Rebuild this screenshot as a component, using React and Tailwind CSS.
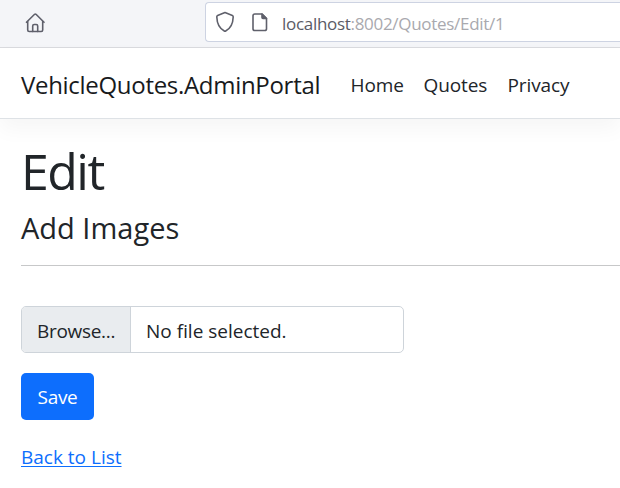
import React from "react";

function HomeIcon() {
  return (
    <svg width="20" height="20" viewBox="0 0 20 20" fill="none" stroke="#5f606b" strokeWidth="1.6" strokeLinecap="round" strokeLinejoin="round">
      <path d="M1.500 9.300 9.600 1.300Q10.300 .7 11 1.300L19 9.300" />
      <path d="M2.700 8.500V17Q2.700 18.500 4.200 18.500H16.200Q17.700 18.500 17.700 17V8.500" />
      <path d="M7.700 18.500V13Q7.700 11.500 9.200 11.500H11.200Q12.700 11.500 12.700 13V18.500" />
    </svg>
  );
}

function ShieldIcon() {
  return (
    <svg width="20" height="22" viewBox="0 0 20 22" fill="none" stroke="#5f606b" strokeWidth="1.6" strokeLinejoin="round">
      <path d="M10 1.500 17.400 4.500Q18.300 4.900 18.200 6C18 12 15.500 17.500 10.700 20Q10 20.400 9.300 20C4.500 17.500 2 12 1.800 6Q1.700 4.900 2.600 4.500Z" />
    </svg>
  );
}

function PageIcon() {
  return (
    <svg width="16" height="19" viewBox="0 0 16 19" fill="none" stroke="#5f606b" strokeWidth="1.600" strokeLinejoin="round">
      <path d="M10 1H2.800Q1 1 1 2.800V15.700Q1 17.500 2.800 17.500H12.700Q14.500 17.500 14.500 15.700V5.500Z" />
      <path d="M10 1V4.500Q10 5.500 11 5.500H14.500Z" fill="#5f606b" />
    </svg>
  );
}

export default function App() {
  return (
    <div className="h-[488px] w-[620px] overflow-hidden bg-white font-['Open_Sans','Noto_Sans',sans-serif] text-[19px] text-[#212529]">
      <div className="flex h-12 border-b border-[#d9dade] bg-[#f4f5f8]">
        <div className="w-[205px] pl-[25px] pt-[13px]">
          <HomeIcon />
        </div>
        <div className="mt-[2px] flex h-10 flex-1 rounded-l border border-r-0 border-[#cdd3e2] bg-white pl-[9px]">
          <div className="w-[37px] pt-[8px]">
            <ShieldIcon />
          </div>
          <div className="w-[30px] pt-[10px]">
            <PageIcon />
          </div>
          <div className="whitespace-nowrap pt-px text-[17px] leading-[40px] tracking-[-0.3px] text-[#a9a9ae]">
            <span className="text-[#5b5b66]">localhost</span>:8002/Quotes/Edit/1
          </div>
        </div>
      </div>

      <header className="flex h-[71px] items-center whitespace-nowrap border-b border-[#dee2e6] pl-[21px] pt-[3px] shadow-[0_10px_20px_rgba(0,0,0,0.04)]">
        <a className="w-[329px] text-[24px] leading-[36px] tracking-[-0.3px] text-[#181a1c]">VehicleQuotes.AdminPortal</a>
        <nav className="flex pl-[0.5px] leading-[36px] tracking-[-0.1px]">
          <a className="w-[73px]">Home</a>
          <a className="w-[84px]">Quotes</a>
          <a>Privacy</a>
        </nav>
      </header>

      <main className="pl-[21px]">
        <h1 className="mt-[22px] h-[60px] text-[50px] leading-[60px] tracking-[-1.5px]">Edit</h1>
        <h4 className="mt-[9px] h-[36px] text-[29px] leading-[36px] tracking-[0px]">Add Images</h4>
        <hr className="mt-[19px] border-[#c7c8c9]" />
        <form>
          <div className="mt-10 flex h-[47px] w-[383px] overflow-hidden whitespace-nowrap rounded-[5px] border border-[#ced4da] leading-[48px]">
            <div className="w-[109px] border-r border-[#ced4da] bg-[#e9ecef] pl-[15px] tracking-[-0.3px]">Browse...</div>
            <div className="pl-[15px]">No file selected.</div>
          </div>
          <button type="button" className="mt-5 block h-[47px] w-[73px] rounded-[5px] bg-[#0d6efd] pt-[2px] leading-[45px] tracking-[-0.3px] text-white">Save</button>
        </form>
        <a className="mt-[22px] block w-fit leading-[30px] text-[#0d6efd] underline decoration-1 underline-offset-2">Back to List</a>
      </main>
    </div>
  );
}
